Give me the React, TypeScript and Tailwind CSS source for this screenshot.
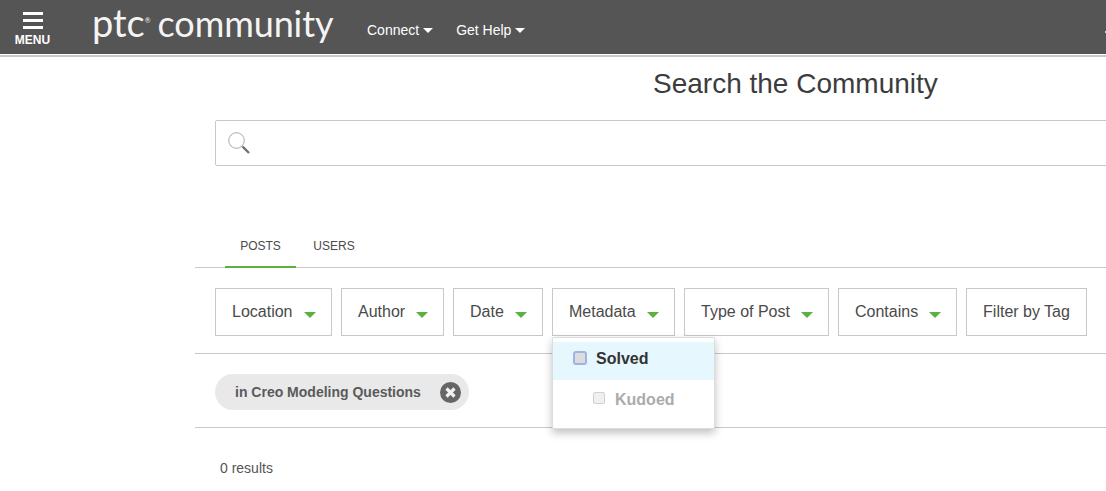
import { useState } from "react";

const sans = "font-['Liberation_Sans',Arial,sans-serif]";

const filters = [
  { label: "Location", width: "w-[117px]" },
  { label: "Author", width: "w-[103px]" },
  { label: "Date", width: "w-[90px]" },
  { label: "Metadata", width: "w-[123px]" },
  { label: "Type of Post", width: "w-[145px]" },
  { label: "Contains", width: "w-[119px]" },
];

const Caret = ({ className }: { className: string }) => (
  <span className={`inline-block h-0 w-0 border-x-[5px] border-t-[5px] border-x-transparent ${className}`} />
);

const FilterButton = ({ label, width }: { label: string; width: string }) => (
  <button className={`flex h-[48px] items-center border border-[#c8c8c8] bg-white pl-[16px] text-[16px] text-[#4a4a4a] ${width}`}>
    <span>{label}</span>
    <Caret className="ml-[11px] mt-[6px] border-x-[6px] border-t-[6px] border-t-[#5cb03f]" />
  </button>
);

export default function App() {
  const [tab, setTab] = useState("POSTS");

  return (
    <div className={`h-[491px] w-[1106px] overflow-hidden bg-white ${sans}`}>
      <header className="flex h-[54px] items-start bg-[#555555] text-white">
        <button className="mt-[12px] flex w-[65px] flex-col items-center">
          <span className="flex w-[20px] flex-col gap-[4px]">
            <span className="h-[3px] bg-white" />
            <span className="h-[3px] bg-white" />
            <span className="h-[3px] bg-white" />
          </span>
          <span className="mt-[4px] text-[12px] font-bold leading-[14px]">MENU</span>
        </button>
        <div className="ml-[27px] flex h-[50px] w-[241px] items-baseline font-['Lato',sans-serif] text-[36px] leading-[44px] text-[#f4f4f4]">
          <span className="text-[38px]">ptc</span>
          <span className="-translate-y-[14px] text-[7px] leading-none">®</span>
          <span className="ml-[7px] tracking-[-0.1px]">community</span>
        </div>
        <nav className="ml-[34px] flex pt-[21px] text-[14px] leading-[18px]">
          <a className="flex items-center gap-[4px]">
            Connect
            <Caret className="border-t-white" />
          </a>
          <a className="ml-[23px] flex items-center gap-[4px]">
            Get Help
            <Caret className="border-t-white" />
          </a>
        </nav>
        <span className="ml-auto mt-[31px] h-[2px] w-px bg-[#c5cde8]" />
      </header>
      <div className="h-[3px] border-t border-white bg-[#c8c8c8]" />

      <main className="pl-[195px]">
        <h1 className="mt-[9px] pl-[458px] text-[28px] leading-[36px] text-[#3c3c3c]">Search the Community</h1>

        <div className="ml-[20px] mt-[18px] flex h-[46px] w-[900px] items-center rounded-l-[2px] border border-[#c8c8c8] pl-[11px]">
          <svg width="24" height="24" viewBox="0 0 24 24" fill="none">
            <circle cx="9.5" cy="9.5" r="7.8" stroke="#a8a8a8" strokeWidth="1" />
            <path d="M15.5 15.5 L22 22" stroke="#707070" strokeWidth="2.4" />
          </svg>
        </div>

        <div className="mt-[65px] flex h-[37px] border-b border-[#c8c8c8] pl-[30px] text-[12px]">
          {["POSTS", "USERS"].map((name) => (
            <button
              key={name}
              onClick={() => setTab(name)}
              className={`-mb-px flex h-[37px] items-start justify-center pt-[8px] leading-[14px] text-[#4a4a4a] ${
                name === "POSTS" ? "w-[71px]" : "ml-[1px] w-[74px]"
              } ${name === tab ? "border-b-2 border-[#5cb03f]" : ""}`}
            >
              {name}
            </button>
          ))}
        </div>

        <div className="relative flex h-[86px] gap-[9px] border-b border-[#c8c8c8] pl-[20px] pt-[20px]">
          {filters.map((f) => (
            <FilterButton key={f.label} label={f.label} width={f.width} />
          ))}
          <button className="flex h-[48px] w-[121px] items-center justify-center border border-[#c8c8c8] bg-white text-[16px] text-[#4a4a4a]">
            Filter by Tag
          </button>

          <div className="absolute left-[357px] top-[69px] z-10 h-[92px] w-[163px] rounded-[2px] border border-[#dcdcdc] bg-white pt-[4px] shadow-[0_4px_8px_rgba(0,0,0,0.25)]">
            <div className="flex h-[38px] items-center bg-[#e6f7fd] pb-[5px] pl-[20px]">
              <span className="-mt-[2px] h-[14px] w-[14px] rounded-[3px] border-2 border-[#9db4e6] bg-[#dcdcdc]" />
              <span className="ml-[9px] text-[16px] font-bold text-[#333333]">Solved</span>
            </div>
            <div className="flex h-[40px] items-center pl-[40px]">
              <span className="-mt-[4px] h-[12px] w-[12px] rounded-[2px] border border-[#d0d0d0] bg-[#f0f0f0]" />
              <span className="ml-[10px] text-[16px] font-bold text-[#ababab]">Kudoed</span>
            </div>
          </div>
        </div>

        <div className="flex h-[74px] items-start border-b border-[#c8c8c8] pl-[20px] pt-[20px]">
          <div className="flex h-[36px] w-[254px] items-center rounded-full bg-[#e9e9e9] pl-[20px] text-[14px] font-bold text-[#5a5a5a]">
            in Creo Modeling Questions
            <span className="ml-[19px] flex h-[21px] w-[21px] items-center justify-center rounded-full bg-[#666666]">
              <svg width="13" height="13" viewBox="0 0 13 13">
                <path d="M2.5 2.5 L10.5 10.5 M10.5 2.5 L2.5 10.5" stroke="#f0f0f0" strokeWidth="3.2" />
              </svg>
            </span>
          </div>
        </div>

        <p className="mt-[31px] pl-[25px] text-[14px] leading-[18px] text-[#555555]">0 results</p>
      </main>
    </div>
  );
}
